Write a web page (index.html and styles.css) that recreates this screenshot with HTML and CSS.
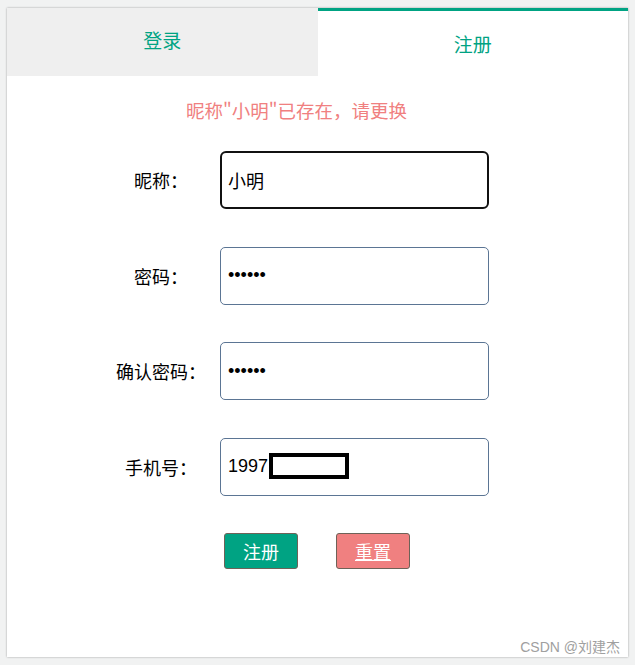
FILE: index.html
```html
<!DOCTYPE html>
<html lang="zh">
<head>
    <meta charset="UTF-8">
    <meta name="viewport" content="width=device-width, initial-scale=1.0">
    <title>注册</title>
    <link rel="stylesheet" href="styles.css">
</head>
<body>
    <div class="card">
        <!-- 标签页 -->
        <div class="tabs">
            <div class="tab">登录</div>
            <div class="tab active">注册</div>
        </div>

        <!-- 提示信息 -->
        <p class="msg">昵称"小明"已存在，请更换</p>

        <form class="form">
            <div class="row">
                <label class="label" for="nick">昵称：</label>
                <input class="field" id="nick" type="text" value="小明" autofocus>
            </div>
            <div class="row">
                <label class="label" for="pwd">密码：</label>
                <input class="field" id="pwd" type="password" value="123456">
            </div>
            <div class="row">
                <label class="label" for="pwd2">确认密码：</label>
                <input class="field" id="pwd2" type="password" value="123456">
            </div>
            <div class="row">
                <label class="label" for="phone">手机号：</label>
                <div class="field-wrap">
                    <input class="field" id="phone" type="text" value="1997">
                    <span class="mask"></span>
                </div>
            </div>
            <div class="buttons">
                <button type="button" class="btn btn-green">注册</button>
                <button type="reset" class="btn btn-red"><u>重置</u></button>
            </div>
        </form>

        <span class="watermark">CSDN @刘建杰</span>
    </div>
</body>
</html>
```

FILE: styles.css
```css
/* 页面 */
body {
    margin: 0;
    padding: 8px 7px 8px 7px;
    background-color: #f1f2f2;
    font-family: "Noto Sans CJK SC", "Liberation Sans", sans-serif;
}

/* 卡片 */
.card {
    position: relative;
    width: 621px;
    height: 649px;
    background-color: #fff;
    box-shadow: 0 0 2px rgba(0, 0, 0, 0.35);
}

/* 标签页 */
.tabs {
    display: flex;
    height: 68px;
}

.tab {
    flex: 1;
    display: flex;
    justify-content: center;
    align-items: center;
    padding-bottom: 5px;
    background-color: #efefef;
    color: #00a383;
    font-size: 19px;
}

.tab.active {
    background-color: #fff;
    border-top: 3px solid #00a383;
    padding-top: 2px;
    padding-bottom: 2px;
}

/* 提示信息 */
.msg {
    margin: 22px 0 0 0;
    padding-right: 42px;
    text-align: center;
    color: #f08080;
    font-size: 18.5px;
    line-height: 24px;
}

/* 表单 */
.form {
    display: flex;
    flex-direction: column;
    gap: 37.5px;
    margin-top: 29px;
    padding-left: 95px;
}

.row {
    display: flex;
    align-items: center;
}

.label {
    width: 118px;
    text-align: center;
    font-size: 18px;
    color: #000;
}

.field-wrap {
    position: relative;
}

.field {
    box-sizing: border-box;
    width: 269px;
    height: 58px;
    padding: 0 7px;
    border: 1px solid #5b7594;
    border-radius: 5px;
    font-family: "Liberation Sans", "Noto Sans CJK SC", sans-serif;
    font-size: 18px;
    color: #000;
    background-color: #fff;
}

.field:focus {
    outline: none;
    border: 2px solid #111;
    border-radius: 6px;
    padding: 0 6px;
}

/* 打码 */
.mask {
    position: absolute;
    left: 49px;
    top: 15px;
    width: 72px;
    height: 18px;
    border: 4px solid #000;
    background-color: #fff;
}

/* 按钮 */
.buttons {
    display: flex;
    justify-content: center;
    gap: 38px;
    margin-left: -95px;
    padding-right: 1px;
}

.btn {
    width: 74px;
    height: 36px;
    border: 1px solid #6e6258;
    border-radius: 3px;
    color: #fff;
    font-family: "Noto Sans CJK SC", sans-serif;
    font-size: 18px;
    padding: 0;
    cursor: pointer;
}

.btn-green {
    background-color: #00a383;
}

.btn-red {
    background-color: #f08080;
}

/* 水印 */
.watermark {
    position: absolute;
    right: 8px;
    bottom: 1px;
    color: #a0a0a0;
    font-family: "Liberation Sans", "Noto Sans CJK SC", sans-serif;
    font-size: 14px;
}
```
